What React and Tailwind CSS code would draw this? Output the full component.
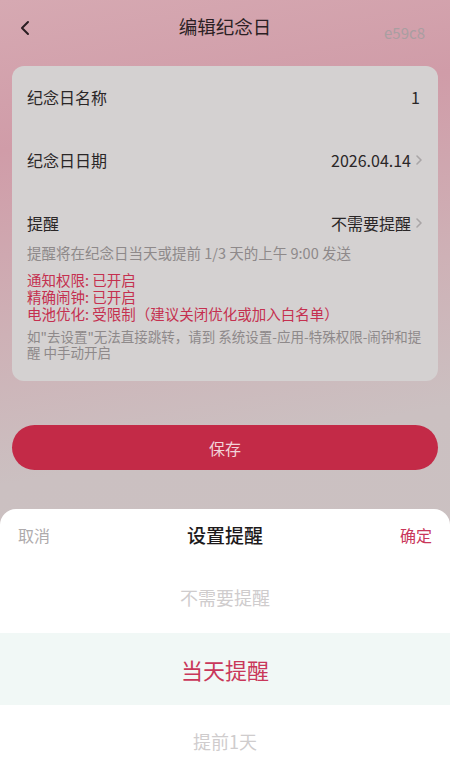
import React from 'react'

const font = { fontFamily: '"Noto Sans CJK SC", "Noto Sans", sans-serif' }

function Chevron() {
  return (
    <svg width="8" height="12" viewBox="0 0 8 12" className="ml-1">
      <path d="M2 2l4 4-4 4" fill="none" stroke="#a9a5a6" strokeWidth="1.6" strokeLinecap="round" strokeLinejoin="round" />
    </svg>
  )
}

export default function App() {
  return (
    <div style={font} className="relative h-[758px] w-[450px] overflow-hidden bg-[linear-gradient(170deg,#d6a9b2_0%,#d09ca8_18%,#ceb1b6_40%,#cbc0c1_58%,#cbc2c2_100%)]">

      {/* Header */}
      <header className="flex items-center h-[56px] px-4 relative">
        <svg width="14" height="18" viewBox="0 0 14 18" className="ml-[2px]">
          <path d="M10 3L4 9l6 6" fill="none" stroke="#2a1e22" strokeWidth="2" strokeLinecap="round" strokeLinejoin="round" />
        </svg>
        <h1 className="absolute left-0 right-0 text-center text-[18.5px] text-[#2b1f24] pointer-events-none -mt-[2px]">编辑纪念日</h1>
        <span className="ml-auto mt-[10px] text-[15px] text-[#a99ea1] mr-[9px]">e59c8</span>
      </header>

      {/* Card */}
      <section className="mx-3 mt-[10px] bg-[#d4d1d1] rounded-[12px] px-[15px] pt-[20px] pb-[21px]">
        <div className="flex items-center justify-between h-[22px] text-[16px] text-[#2a2627]">
          <span>纪念日名称</span>
          <span className="mr-[3px]">1</span>
        </div>
        <div className="flex items-center justify-between h-[22px] mt-[41px] text-[16px] text-[#2a2627]">
          <span>纪念日日期</span>
          <span className="flex items-center">2026.04.14<Chevron /></span>
        </div>
        <div className="flex items-center justify-between h-[22px] mt-[41px] text-[16px] text-[#2a2627]">
          <span>提醒</span>
          <span className="flex items-center">不需要提醒<Chevron /></span>
        </div>
        <p className="mt-[10px] text-[14.5px] text-[#8e898a] leading-[18px]">提醒将在纪念日当天或提前 1/3 天的上午 9:00 发送</p>
        <div className="mt-[9px] text-[14.5px] leading-[17px] text-[#c5304f]">
          <p>通知权限: 已开启</p>
          <p>精确闹钟: 已开启</p>
          <p>电池优化: 受限制（建议关闭优化或加入白名单）</p>
        </div>
        <p className="mt-[6px] text-[13.5px] leading-[16px] text-[#8e898a]">如"去设置"无法直接跳转，请到 系统设置-应用-特殊权限-闹钟和提醒 中手动开启</p>
      </section>

      {/* Save button */}
      <div className="mx-3 mt-[44px]">
        <button className="w-full h-[45px] rounded-full bg-[#c32a47] text-[16px] text-[#f2d3d9]">保存</button>
      </div>

      {/* Bottom sheet */}
      <div className="absolute left-0 right-0 bottom-0 h-[249px] bg-white rounded-t-[16px]">
        <div className="flex items-center justify-between h-[52px] px-[18px]">
          <span className="text-[16px] text-[#aeaaab]">取消</span>
          <span className="text-[19px] font-medium text-[#1d1a1b]">设置提醒</span>
          <span className="text-[16px] text-[#c9375a]">确定</span>
        </div>
        <div className="flex items-center justify-center h-[72px] text-[18px] text-[#cfcccd]">不需要提醒</div>
        <div className="flex items-center justify-center h-[72px] bg-[#f1f8f6] text-[22px] text-[#c9375a]">当天提醒</div>
        <div className="flex items-center justify-center h-[72px] text-[18px] text-[#cfcccd]">提前1天</div>
      </div>
    </div>
  )
}
